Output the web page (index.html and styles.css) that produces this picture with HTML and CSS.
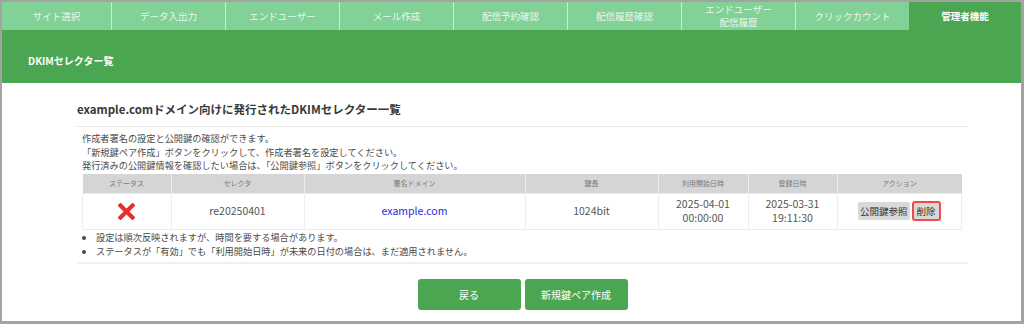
FILE: index.html
```html
<!DOCTYPE html>
<html lang="ja">
<head>
<meta charset="utf-8">
<link rel="stylesheet" href="styles.css">
</head>
<body>
<div class="frame">
  <nav class="tabs">
    <div class="tab">サイト選択</div>
    <div class="tab">データ入出力</div>
    <div class="tab">エンドユーザー</div>
    <div class="tab">メール作成</div>
    <div class="tab">配信予約確認</div>
    <div class="tab">配信履歴確認</div>
    <div class="tab two"><span class="line">エンドユーザー</span><span class="line">配信履歴</span></div>
    <div class="tab">クリックカウント</div>
    <div class="tab active">管理者機能</div>
  </nav>
  <div class="band"><span class="band-title">DKIMセレクター覧</span></div>
  <main class="content">
    <h2 class="heading">example.comドメイン向けに発行されたDKIMセレクター一覧</h2>
    <section class="panel">
      <p class="intro">作成者署名の設定と公開鍵の確認ができます。<br>「新規鍵ペア作成」ボタンをクリックして、作成者署名を設定してください。<br>発行済みの公開鍵情報を確認したい場合は、「公開鍵参照」ボタンをクリックしてください。</p>
      <table class="grid">
        <thead>
          <tr>
            <th class="c-status">ステータス</th>
            <th class="c-sel">セレクタ</th>
            <th class="c-dom">署名ドメイン</th>
            <th class="c-len">鍵長</th>
            <th class="c-start">利用開始日時</th>
            <th class="c-reg">登録日時</th>
            <th class="c-act">アクション</th>
          </tr>
        </thead>
        <tbody>
          <tr>
            <td><svg class="xmark" width="17" height="17" viewBox="0 0 17 17"><path d="M2.5 2.5 L14.5 14.5 M14.5 2.5 L2.5 14.5" stroke="#ea2f2a" stroke-width="4.2" stroke-linecap="square"/></svg></td>
            <td>re20250401</td>
            <td><a class="link" href="#">example.com</a></td>
            <td>1024bit</td>
            <td>2025-04-01<br>00:00:00</td>
            <td>2025-03-31<br>19:11:30</td>
            <td><span class="acts"><button class="btn-gray">公開鍵参照</button><button class="btn-gray del">削除</button></span></td>
          </tr>
        </tbody>
      </table>
      <ul class="notes">
        <li>設定は順次反映されますが、時間を要する場合があります。</li>
        <li>ステータスが「有効」でも「利用開始日時」が未来の日付の場合は、まだ適用されません。</li>
      </ul>
    </section>
    <div class="actions">
      <button class="btn-green">戻る</button>
      <button class="btn-green">新規鍵ペア作成</button>
    </div>
  </main>
</div>
</body>
</html>
```

FILE: styles.css
```css
html, body {
  margin: 0;
  padding: 0;
  background: #ffffff;
}
body {
  font-family: "Noto Sans CJK JP", "Noto Sans", sans-serif;
  color: #444;
}
.frame {
  width: 1024px;
  height: 324px;
  box-sizing: border-box;
  border-style: solid;
  border-color: #a3a3a3;
  border-width: 2px 3px 3px 2px;
  background: #fff;
  overflow: hidden;
}
.tabs {
  display: grid;
  grid-template-columns: 109px repeat(7, 114px) 1fr;
  height: 28px;
  background: #82d196;
}
.tab {
  display: flex;
  align-items: center;
  justify-content: center;
  text-align: center;
  font-size: 9.5px;
  line-height: 12px;
  color: #eaf7ec;
  border-left: 1px solid #c9ecd2;
}
.tab.two {
  flex-direction: column;
  gap: 2px;
}
.line {
  display: block;
  line-height: 11px;
}
.tab:first-child {
  border-left: none;
}
.tab.active {
  background: #4ba652;
  color: #ffffff;
  font-weight: bold;
  border-left: none;
}
.band {
  height: 53px;
  background: #4ba652;
  display: flex;
  align-items: center;
  padding-left: 26px;
}
.band-title {
  color: #ffffff;
  font-size: 10px;
  font-weight: bold;
  padding-top: 8px;
}
.content {
  width: 891px;
  margin-left: 75px;
  padding-top: 17px;
}
.heading {
  margin: 0;
  font-size: 11.5px;
  line-height: 18px;
  font-weight: bold;
  color: #383838;
  padding-bottom: 8px;
  border-bottom: 1px solid #e6e6e6;
}
.panel {
  padding: 5px 6px 4px 5px;
  border-bottom: 2px solid #efefef;
}
.intro {
  margin: 0;
  font-size: 9.2px;
  line-height: 13.5px;
  color: #4a4a4a;
}
.grid {
  width: 100%;
  border-collapse: collapse;
  margin-top: 1px;
}
.grid th {
  background: #d5d5d5;
  color: #7a7a7a;
  font-weight: normal;
  font-size: 7px;
  height: 19px;
  padding: 0;
  border-left: 1px solid #ececec;
}
.grid th:first-child {
  border-left: none;
}
.grid td {
  height: 35px;
  padding: 0;
  text-align: center;
  font-size: 10.5px;
  line-height: 14px;
  color: #555;
  border: 1px solid #ececec;
}
.c-status { width: 88px; }
.c-sel { width: 132px; }
.c-dom { width: 220px; }
.c-len { width: 132px; }
.c-start { width: 89px; }
.c-reg { width: 88px; }
.xmark {
  display: block;
  margin: 0 auto;
}
.link {
  color: #2a2ae6;
  text-decoration: none;
}
.acts {
  display: inline-flex;
  align-items: center;
  gap: 2px;
}
.btn-gray {
  font-family: inherit;
  font-size: 9.5px;
  line-height: 12px;
  color: #333;
  background: #d9d9d9;
  border: none;
  border-radius: 2px;
  padding: 3px 2px;
  margin: 0;
}
.btn-gray.del {
  border: 2px solid #f24a4a;
  border-radius: 3px;
  padding: 2px 3px;
}
.notes {
  margin: 0;
  padding: 0 0 0 14px;
  font-size: 9.2px;
  line-height: 14px;
  color: #4a4a4a;
}
.actions {
  display: flex;
  justify-content: center;
  gap: 4px;
  padding-top: 15px;
}
.btn-green {
  font-family: inherit;
  width: 103px;
  height: 31px;
  background: #4ba652;
  color: #fff;
  border: none;
  border-radius: 3px;
  font-size: 10px;
  margin: 0;
}
```
